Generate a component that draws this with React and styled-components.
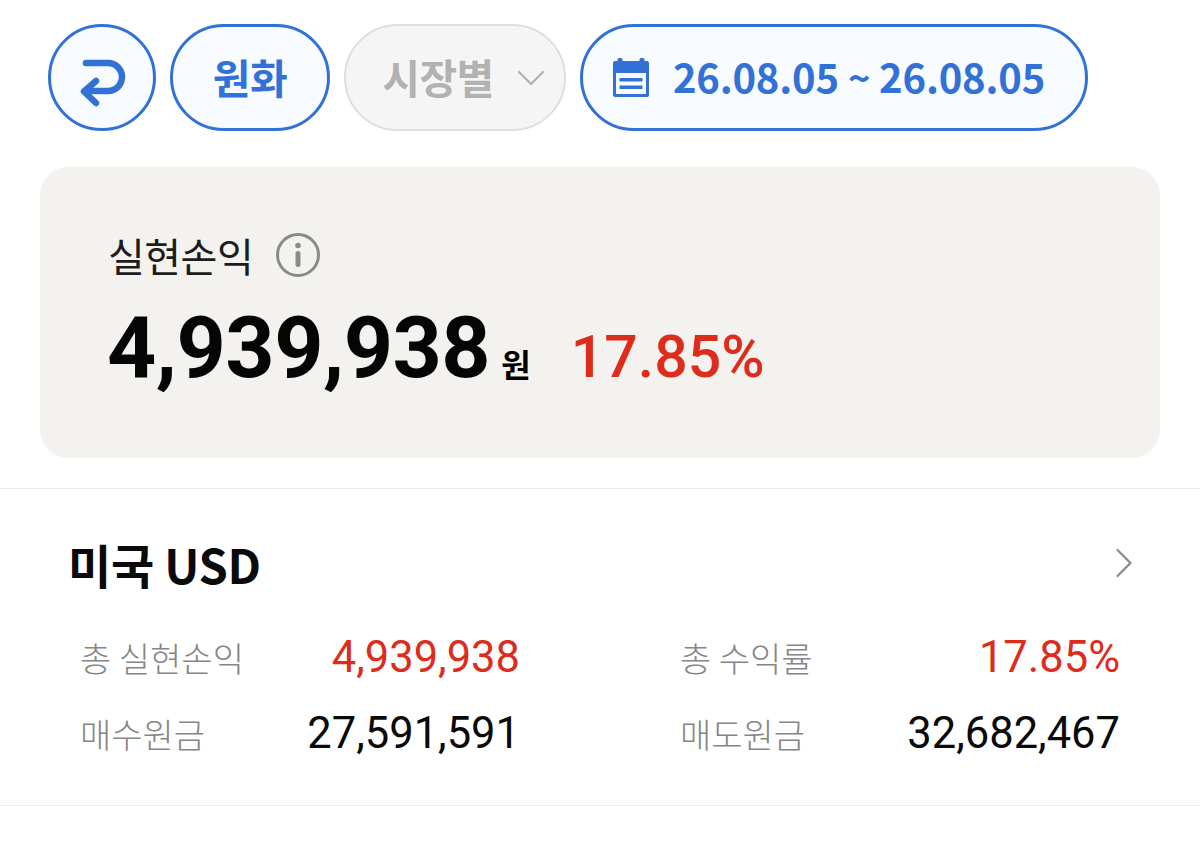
import React from 'react'
import styled, { createGlobalStyle } from 'styled-components'
import { ChevronDown, ChevronRight } from 'lucide-react'

const GlobalStyle = createGlobalStyle`
  html, body {
    margin: 0;
    padding: 0;
    background: #fff;
  }
  * { box-sizing: border-box; }
`

const KR = `"Noto Sans CJK KR", "Noto Sans", sans-serif`
const NUM = `Roboto, "Noto Sans CJK KR", sans-serif`
const BLUE = '#3271d6'
const RED = '#dd2c1c'

const Page = styled.div`
  width: 1200px;
  height: 862px;
  overflow: hidden;
  font-family: ${KR};
  color: #000;
`

const Toolbar = styled.div`
  display: flex;
  gap: 14px;
  padding: 24px 0 0 48px;
  height: 167px;
`

const Pill = styled.div`
  height: 107px;
  width: ${p => p.$w}px;
  border-radius: 54px;
  border: ${p => (p.$off ? '2px solid #dedede' : `3px solid ${BLUE}`)};
  background: ${p => (p.$off ? '#f5f5f5' : '#f8fbff')};
  color: ${p => (p.$off ? '#b2b2b2' : BLUE)};
  display: flex;
  align-items: center;
  justify-content: center;
  gap: ${p => p.$gap || 0}px;
  padding-right: ${p => p.$pr || 0}px;
  font-size: 41px;
  font-weight: 700;
  letter-spacing: -0.5px;
`

const PillText = styled.span`
  padding-bottom: 4px;
`

const DateText = styled.span`
  padding-bottom: 4px;
  font-size: 40px;
  letter-spacing: -0.2px;
  white-space: pre;
`

const Tilde = styled.span`
  font-size: 38px;
  margin: 0 9px;
`

const MarketChevron = styled(ChevronDown)`
  margin-right: -27px;
`

const Card = styled.div`
  margin: 0 40px;
  height: 291px;
  border-radius: 28px;
  background: #f3f2ee;
  padding: 58px 68px 0;
`

const CardLabel = styled.div`
  display: flex;
  align-items: center;
  gap: 22px;
  height: 60px;
  font-size: 40px;
  font-weight: 400;
  color: #1c1c1c;
  letter-spacing: -0.5px;
`

const Amount = styled.div`
  display: flex;
  align-items: baseline;
  margin-top: 13px;
  margin-left: -1px;
  font-family: ${NUM};
`

const Big = styled.span`
  font-size: 86px;
  font-weight: 700;
  line-height: 100px;
  color: #050505;
  letter-spacing: -0.5px;
`

const Unit = styled.span`
  font-family: ${KR};
  font-size: 32px;
  font-weight: 700;
  margin-left: 11px;
`

const Percent = styled.span`
  font-size: 59px;
  font-weight: 500;
  color: ${RED};
  margin-left: 40px;
`

const Divider = styled.div`
  height: 1px;
  background: #ececec;
  margin-top: ${p => p.$top}px;
`

const Section = styled.div`
  height: 316px;
  padding: 44px 80px 0 80px;
`

const SectionHead = styled.div`
  display: flex;
  align-items: center;
  justify-content: space-between;
  height: 60px;
  margin: 0 -30px 0 -12px;
  font-size: 47px;
  font-weight: 700;
  color: #0a0a0a;
  letter-spacing: -0.3px;
`

const Grid = styled.div`
  display: grid;
  grid-template-columns: 440px 440px;
  column-gap: 160px;
  row-gap: 16px;
  margin-top: 34px;
`

const Row = styled.div`
  display: flex;
  align-items: center;
  justify-content: space-between;
  height: 60px;
`

const Label = styled.span`
  font-size: 34px;
  font-weight: 300;
  color: #858585;
`

const Value = styled.span`
  font-family: ${NUM};
  font-size: 43.5px;
  font-weight: 400;
  color: ${p => (p.$red ? RED : '#0a0a0a')};
`

// drawn in page coordinates, the glyph sits a bit below the middle of the circle
const ReturnIcon = () => (
  <svg width="102" height="101" viewBox="51 27 102 101" fill="none" stroke={BLUE} strokeWidth="6.500" strokeLinecap="round" strokeLinejoin="round">
    <path d="M86 63H108a14 14 0 0 1 0 28H85" />
    <path d="M96 81 84 91.500 96 103" />
  </svg>
)

const CalendarIcon = () => (
  <svg width="36" height="39" viewBox="0 0 36 39">
    <path fill={BLUE} d="M6 0h2a1.500 1.500 0 0 1 1.500 1.500V3h17V1.500A1.500 1.500 0 0 1 28 0h2a1.500 1.500 0 0 1 1.500 1.500V3H34a2 2 0 0 1 2 2v32a2 2 0 0 1-2 2H2a2 2 0 0 1-2-2V5a2 2 0 0 1 2-2h2.500V1.500A1.500 1.500 0 0 1 6 0z" />
    <rect x="3" y="15" width="30" height="21" fill="#f8fbff" />
    <rect x="6.500" y="20" width="23" height="3.500" fill={BLUE} />
    <rect x="6.500" y="27.500" width="23" height="3.500" fill={BLUE} />
  </svg>
)

const InfoIcon = () => (
  <svg width="46" height="46" viewBox="0 0 46 46">
    <circle cx="23" cy="23" r="20.500" fill="none" stroke="#8a8a8a" strokeWidth="3" />
    <circle cx="23" cy="13.500" r="2.800" fill="#8a8a8a" />
    <rect x="20.500" y="19" width="5" height="16" rx="2.500" fill="#8a8a8a" />
  </svg>
)

export default function App () {
  return (
    <Page>
      <GlobalStyle />
      <Toolbar>
        <Pill $w={108}><ReturnIcon /></Pill>
        <Pill $w={160}><PillText>원화</PillText></Pill>
        <Pill $w={222} $off $gap={13}>
          <PillText>시장별</PillText>
          <MarketChevron size={48} strokeWidth={1.100} color="#b0b0b0" />
        </Pill>
        <Pill $w={508} $gap={24} $pr={10}>
          <CalendarIcon />
          <DateText>26.08.05<Tilde>~</Tilde>26.08.05</DateText>
        </Pill>
      </Toolbar>

      <Card>
        <CardLabel>실현손익 <InfoIcon /></CardLabel>
        <Amount>
          <Big>4,939,938</Big>
          <Unit>원</Unit>
          <Percent>17.85%</Percent>
        </Amount>
      </Card>

      <Divider $top={30} />

      <Section>
        <SectionHead>
          미국 USD
          <ChevronRight size={52} strokeWidth={1.050} color="#8c8c8c" />
        </SectionHead>
        <Grid>
          <Row><Label>총 실현손익</Label><Value $red>4,939,938</Value></Row>
          <Row><Label>총 수익률</Label><Value $red>17.85%</Value></Row>
          <Row><Label>매수원금</Label><Value>27,591,591</Value></Row>
          <Row><Label>매도원금</Label><Value>32,682,467</Value></Row>
        </Grid>
      </Section>

      <Divider $top={0} />
    </Page>
  )
}
